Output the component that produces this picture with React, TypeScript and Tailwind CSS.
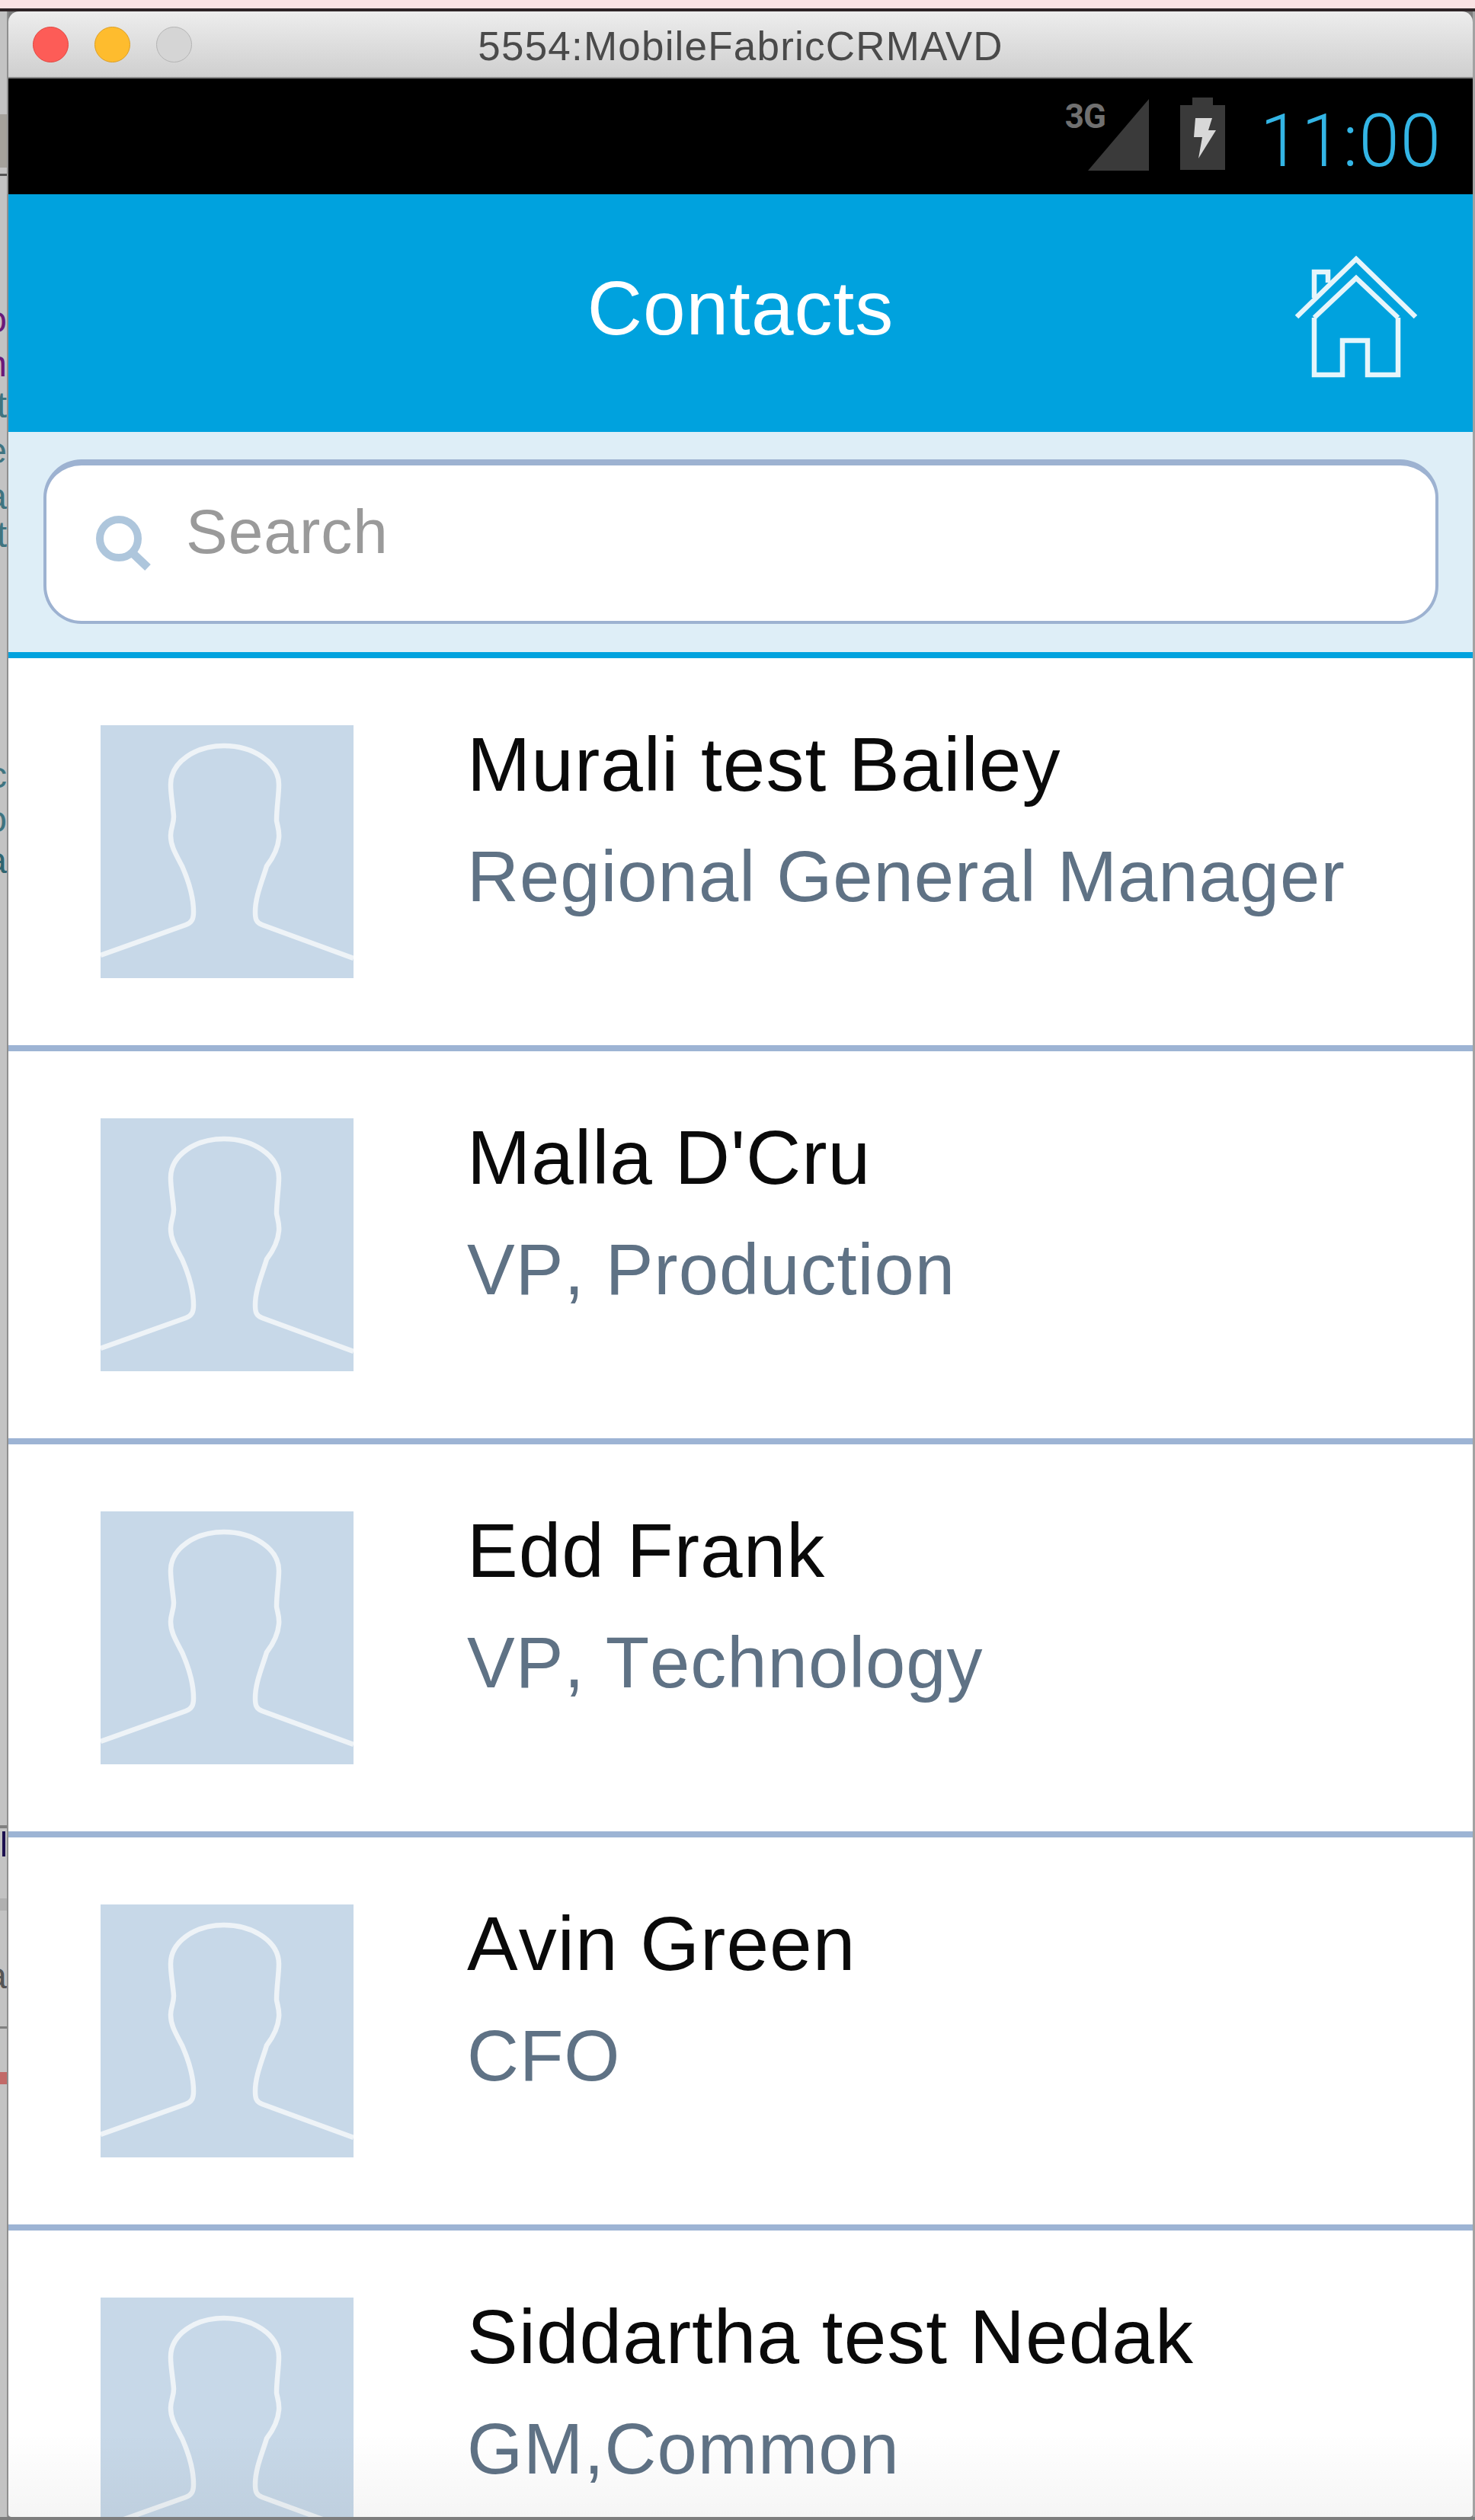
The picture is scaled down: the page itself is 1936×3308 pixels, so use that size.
import React from "react";

const contacts = [
  { name: "Murali test Bailey", role: "Regional General Manager" },
  { name: "Malla D'Cru", role: "VP, Production" },
  { name: "Edd Frank", role: "VP, Technology" },
  { name: "Avin Green", role: "CFO" },
  { name: "Siddartha test Nedak", role: "GM,Common" },
];

// bits of the desktop page that stick out left of the emulator window
const scraps = [
  { top: "top-[378px]", color: "text-[#6b1a7a]", letter: "o" },
  { top: "top-[436px]", color: "text-[#6b1a7a]", letter: "n" },
  { top: "top-[490px]", color: "text-[#3f7480]", letter: "t" },
  { top: "top-[550px]", color: "text-[#3f7480]", letter: "e" },
  { top: "top-[610px]", color: "text-[#3f7480]", letter: "a" },
  { top: "top-[660px]", color: "text-[#3f7480]", letter: "t" },
  { top: "top-[976px]", color: "text-[#3f7480]", letter: "c" },
  { top: "top-[1034px]", color: "text-[#3f7480]", letter: "o" },
  { top: "top-[1088px]", color: "text-[#2f6570]", letter: "a" },
  { top: "top-[2552px]", color: "text-[#555555]", letter: "a" },
];

const Avatar = () => (
  <svg viewBox="0 0 332 332" className="w-[332px] h-[332px] shrink-0 bg-[#c7d8e8]">
    <path
      d="M0 302 L112 262 C120 259 122 254 122 245 C122 232 118 210 107 185 C98 168 92 158 92 145 C92 135 96 130 96 120 C95 105 92 92 92 78 C92 48 125 27 162 27 C199 27 234 48 234 78 C234 92 231 108 231 125 C232 132 235 138 234 148 C233 160 228 172 218 185 C212 205 203 225 203 245 C203 254 204 259 212 262 L332 306"
      fill="none"
      stroke="#eef3f7"
      strokeWidth="6.5"
    />
  </svg>
);

const HomeIcon = () => (
  <svg viewBox="0 0 200 200" className="w-[200px] h-[200px]" fill="none" stroke="#e6f5fb" strokeWidth="6.5">
    <path d="M22 101 L100 25 L178 101" />
    <path d="M45 102 L100 50 L155 102" />
    <path d="M45 102 V177 H82 V132 H115 V177 H155 V102" />
    <path d="M45 76 V42 H63 V56" />
  </svg>
);

const SearchIcon = () => (
  <svg viewBox="0 0 73 72" className="w-[73px] h-[72px] shrink-0" fill="none" stroke="#aec6dc">
    <circle cx="30" cy="30" r="25" strokeWidth="10" />
    <path d="M48 49 L68 68" strokeWidth="11" />
  </svg>
);

const StatusBar = () => (
  <div className="h-[152px] shrink-0 bg-black flex items-start justify-end pr-[41px]">
    <div className="relative w-[110px] h-[96px] mt-[25px]">
      <svg viewBox="0 0 80 94" className="absolute right-0 top-[2px] w-[80px] h-[94px]">
        <path d="M0 94 L80 0 V94 Z" fill="#3a3a3a" />
      </svg>
      <span className="absolute left-0 top-[0px] font-['Roboto',sans-serif] font-bold text-[44px] leading-[50px] tracking-[-1px] text-[#707070]">
        3G
      </span>
    </div>
    <svg viewBox="0 0 59 95" className="w-[59px] h-[95px] mt-[25px] ml-[41px]">
      <path d="M0 10 H16 V0 H43 V10 H59 V95 H0 Z" fill="#3a3a3a" />
      <path d="M20 27 H42 L37 43 H47 L24 80 L29 52 H18 Z" fill="#d8d8d8" />
    </svg>
    <span className="ml-[46px] mt-[27px] font-['Roboto',sans-serif] font-light text-[96px] leading-[110px] tracking-[1px] text-[#33b5e5]">
      11:00
    </span>
  </div>
);

const ContactRow = ({ name, role }: { name: string; role: string }) => (
  <div className="h-[516px] shrink-0 border-b-[8px] border-[#9db4d4] flex pl-[121px] pt-[88px] bg-white">
    <Avatar />
    <div className="ml-[149px] -mt-[21px] [font-kerning:none] font-['Liberation_Sans',Arial,sans-serif]">
      <div className="text-[100px] leading-[145px] tracking-[1px] text-[#0a0a0a]">{name}</div>
      <div className="text-[94px] leading-[145px] mt-[2px] tracking-[1px] text-[#5f7285]">{role}</div>
    </div>
  </div>
);

export default function App() {
  return (
    <div className="w-[1936px] h-[3308px] flex flex-col overflow-hidden bg-[#7d7d7d] font-['Liberation_Sans',Arial,sans-serif]">
      <div className="h-[11px] bg-[#fae3e4] shrink-0" />
      <div className="h-[4px] bg-[#2e2426] shrink-0" />
      <div className="flex flex-1 min-h-0">
        {/* desktop behind, left edge */}
        <div className="relative w-[11px] bg-[#c3c3c3] border-r-[2px] border-[#8f8f8f] overflow-hidden">
          <div className="absolute left-0 top-[135px] w-full h-[70px] bg-[#a5a29c]" />
          <div className="absolute left-0 top-[213px] w-full h-[3px] bg-[#555555]" />
          <div className="absolute left-0 top-[2381px] w-full h-[4px] bg-[#808080]" />
          <div className="absolute left-[3px] top-[2389px] w-[4px] h-[33px] bg-[#1c1050]" />
          <div className="absolute left-0 top-[2477px] w-full h-[16px] bg-[#b0b0b0]" />
          <div className="absolute left-0 top-[2645px] w-full h-[3px] bg-[#808080]" />
          <div className="absolute left-0 top-[2705px] w-full h-[16px] bg-[#c26a68]" />
          {scraps.map((s, i) => (
            <span
              key={i}
              className={`absolute right-0 ${s.top} ${s.color} text-[48px] leading-[54px]`}
            >
              {s.letter}
            </span>
          ))}
        </div>

        {/* emulator window */}
        <div className="relative flex-1 min-w-0 flex flex-col overflow-hidden rounded-t-[14px] rounded-b-[4px]">
          <div className="h-[88px] shrink-0 flex items-center relative bg-gradient-to-b from-[#ededed] to-[#cfcfcf] border-b-[2px] border-[#8a8a8a]">
            <div className="flex gap-[34px] pl-[32px]">
              <div className="w-[47px] h-[47px] rounded-full bg-[#fd5c57] border border-[#e2463f]" />
              <div className="w-[47px] h-[47px] rounded-full bg-[#febc2e] border border-[#dd9f23]" />
              <div className="w-[47px] h-[47px] rounded-full bg-[#d5d5d5] border border-[#b4b4b4]" />
            </div>
            <span className="absolute inset-x-0 top-[16px] text-center text-[53px] leading-[60px] tracking-[1.2px] text-[#4a4a4a]">
              5554:MobileFabricCRMAVD
            </span>
          </div>

          <StatusBar />

          <header className="h-[312px] shrink-0 bg-[#00a2de] grid grid-cols-[1fr_auto_1fr] items-center">
            <div />
            <h1 className="text-[100px] leading-[120px] tracking-[1px] text-white -mt-[14px]">Contacts</h1>
            <div className="flex justify-end pr-[53px] pt-[8px]">
              <HomeIcon />
            </div>
          </header>

          <div className="h-[297px] shrink-0 bg-[#deeef7] border-b-[8px] border-[#00a2de] pl-[46px] pr-[45px] pt-[36px]">
            <div className="h-[216px] bg-white rounded-[50px] border-x-[4px] border-t-[8px] border-b-[4px] border-[#9db2d1] flex items-center pl-[65px]">
              <SearchIcon />
              <span className="ml-[45px] -mt-[30px] text-[82px] leading-[90px] tracking-[1px] text-[#9a9a9a]">Search</span>
            </div>
          </div>

          <div className="flex flex-col">
            {contacts.map((c) => (
              <ContactRow key={c.name} name={c.name} role={c.role} />
            ))}
          </div>

          {/* window fades to gray along the bottom */}
          <div className="absolute inset-x-0 bottom-0 h-[110px] bg-gradient-to-b from-black/0 to-black/[0.04]" />
        </div>

        {/* right edge */}
        <div className="w-[3px] bg-[#a2a2a2]" />
      </div>
      <div className="h-[4px] shrink-0 bg-[#7d7d7d]" />
    </div>
  );
}
